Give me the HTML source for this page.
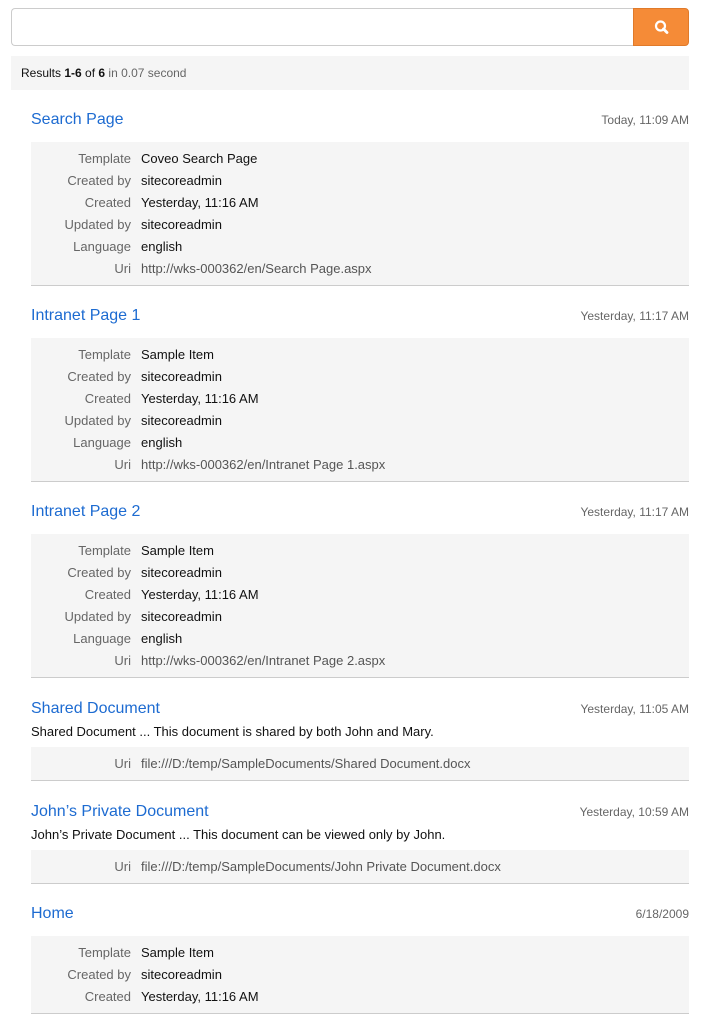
<!DOCTYPE html>
<html><head><meta charset="utf-8"><style>
*{box-sizing:border-box;margin:0;padding:0}
body{width:701px;height:975px;overflow:hidden;background:#fff;font-family:"Liberation Sans",sans-serif;color:#222}
.sb{position:absolute;left:11px;top:8px;width:678px;height:38px}
.inp{position:absolute;left:0;top:0;width:623px;height:38px;border:1px solid #ccc;border-right:none;border-radius:4px 0 0 4px;background:#fff}
.btn{position:absolute;left:622px;top:0;width:56px;height:38px;background:#f58b37;border:1px solid #e07a2a;border-radius:0 4px 4px 0}
.bar{position:absolute;left:11px;top:56px;width:678px;height:34px;background:#f5f5f5;font-size:12px;line-height:34px;padding-left:10px;color:#111}
.bar span{color:#666}
.list{position:absolute;left:31px;top:90px;width:658px}
.res{padding-top:20px}
.res.doc{padding-top:21px}
.t{height:20px;line-height:20px;font-size:16px;color:#1d6bd1;position:relative}
.d{position:absolute;right:0;top:0;font-size:12px;color:#666}
.box{margin-top:12px;background:#f5f5f5;padding:6px 0 5px;border-bottom:1px solid #ccc}
.r{height:22px;line-height:22px;font-size:13px;display:flex}
.l{width:110px;text-align:right;color:#666;padding-right:10px}
.v{color:#111}
.u{color:#555}
.sn{margin-top:3px;font-size:13px;line-height:20px;color:#111}
.sn+.box{margin-top:5px}
</style></head><body>
<div class="sb"><div class="inp"></div><div class="btn"><svg width="56" height="38" viewBox="0 0 56 38"><circle cx="26.5" cy="17" r="4.5" fill="none" stroke="#fff" stroke-width="2.2"/><line x1="29.5" y1="20" x2="33" y2="23.5" stroke="#fff" stroke-width="2.8" stroke-linecap="round"/></svg></div></div>
<div class="bar">Results <b>1-6</b> of <b>6</b> <span>in 0.07 second</span></div>
<div class="list">
<div class="res"><div class="t">Search Page<span class="d">Today, 11:09 AM</span></div><div class="box">
<div class="r"><span class="l">Template</span><span class="v">Coveo Search Page</span></div>
<div class="r"><span class="l">Created by</span><span class="v">sitecoreadmin</span></div>
<div class="r"><span class="l">Created</span><span class="v">Yesterday, 11:16 AM</span></div>
<div class="r"><span class="l">Updated by</span><span class="v">sitecoreadmin</span></div>
<div class="r"><span class="l">Language</span><span class="v">english</span></div>
<div class="r"><span class="l">Uri</span><span class="u">http://wks-000362/en/Search Page.aspx</span></div></div></div>
<div class="res"><div class="t">Intranet Page 1<span class="d">Yesterday, 11:17 AM</span></div><div class="box">
<div class="r"><span class="l">Template</span><span class="v">Sample Item</span></div>
<div class="r"><span class="l">Created by</span><span class="v">sitecoreadmin</span></div>
<div class="r"><span class="l">Created</span><span class="v">Yesterday, 11:16 AM</span></div>
<div class="r"><span class="l">Updated by</span><span class="v">sitecoreadmin</span></div>
<div class="r"><span class="l">Language</span><span class="v">english</span></div>
<div class="r"><span class="l">Uri</span><span class="u">http://wks-000362/en/Intranet Page 1.aspx</span></div></div></div>
<div class="res"><div class="t">Intranet Page 2<span class="d">Yesterday, 11:17 AM</span></div><div class="box">
<div class="r"><span class="l">Template</span><span class="v">Sample Item</span></div>
<div class="r"><span class="l">Created by</span><span class="v">sitecoreadmin</span></div>
<div class="r"><span class="l">Created</span><span class="v">Yesterday, 11:16 AM</span></div>
<div class="r"><span class="l">Updated by</span><span class="v">sitecoreadmin</span></div>
<div class="r"><span class="l">Language</span><span class="v">english</span></div>
<div class="r"><span class="l">Uri</span><span class="u">http://wks-000362/en/Intranet Page 2.aspx</span></div></div></div>
<div class="res doc"><div class="t">Shared Document<span class="d">Yesterday, 11:05 AM</span></div>
<div class="sn">Shared Document ... This document is shared by both John and Mary.</div><div class="box">
<div class="r"><span class="l">Uri</span><span class="u">file:///D:/temp/SampleDocuments/Shared Document.docx</span></div></div></div>
<div class="res doc"><div class="t">John’s Private Document<span class="d">Yesterday, 10:59 AM</span></div>
<div class="sn">John’s Private Document ... This document can be viewed only by John.</div><div class="box">
<div class="r"><span class="l">Uri</span><span class="u">file:///D:/temp/SampleDocuments/John Private Document.docx</span></div></div></div>
<div class="res"><div class="t">Home<span class="d">6/18/2009</span></div><div class="box">
<div class="r"><span class="l">Template</span><span class="v">Sample Item</span></div>
<div class="r"><span class="l">Created by</span><span class="v">sitecoreadmin</span></div>
<div class="r"><span class="l">Created</span><span class="v">Yesterday, 11:16 AM</span></div></div></div>
</div>
</body></html>
